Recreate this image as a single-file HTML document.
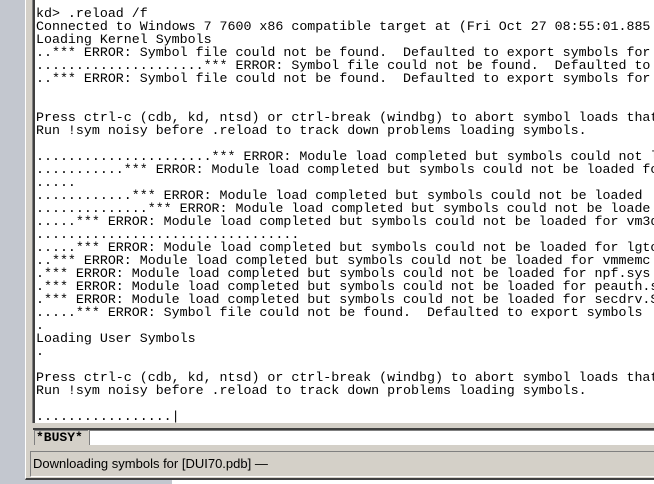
<!DOCTYPE html>
<html><head><style>
*{margin:0;padding:0;box-sizing:border-box}
body{width:654px;height:484px;overflow:hidden;background:#fff;position:relative}
#lb{position:absolute;left:0;top:0;width:25px;height:484px;background:#c3c7cf}
#bb{position:absolute;left:0;top:480px;width:172px;height:4px;background:#c3c7cf}
#frame{position:absolute;left:25px;top:0;width:629px;height:480px;background:#d4d0c8;border-left:1px solid #fff;border-bottom:2px solid #404040}
#pane{position:absolute;left:33px;top:0;width:621px;height:423px;background:#fff;border-left:2px solid #404040;box-shadow:-1px 0 0 #808080}
#pane pre{position:absolute;left:1px;top:7px;font-family:"Liberation Mono",monospace;font-size:13.3px;line-height:13px;color:#000;white-space:pre}
#sep{position:absolute;left:33px;top:428px;width:621px;height:2px;background:#404040}
#busy{position:absolute;left:34px;top:430px;width:54px;height:15px;background:#d4d0c8;border-top:1px solid #808080;border-left:1px solid #808080;font-family:"Liberation Mono",monospace;font-size:13px;line-height:14px;padding-left:1px;font-weight:bold}
#inp{position:absolute;left:89px;top:430px;width:565px;height:15px;background:#fff;border-top:1px solid #808080;border-left:1px solid #808080}
#status{position:absolute;left:30px;top:451px;width:624px;height:26px;border-top:1px solid #808080;border-left:1px solid #808080;border-bottom:1px solid #fff;font-family:"Liberation Sans",sans-serif;font-size:13px;line-height:24px;padding-left:2px;color:#000}
</style></head><body>
<div id="lb"></div><div id="bb"></div>
<div id="frame"></div>
<div id="pane"><pre>kd&gt; .reload /f
Connected to Windows 7 7600 x86 compatible target at (Fri Oct 27 08:55:01.885
Loading Kernel Symbols
..*** ERROR: Symbol file could not be found.  Defaulted to export symbols for
.....................*** ERROR: Symbol file could not be found.  Defaulted to
..*** ERROR: Symbol file could not be found.  Defaulted to export symbols for


Press ctrl-c (cdb, kd, ntsd) or ctrl-break (windbg) to abort symbol loads that
Run !sym noisy before .reload to track down problems loading symbols.

......................*** ERROR: Module load completed but symbols could not l
...........*** ERROR: Module load completed but symbols could not be loaded fo
.....
............*** ERROR: Module load completed but symbols could not be loaded
..............*** ERROR: Module load completed but symbols could not be loade
.....*** ERROR: Module load completed but symbols could not be loaded for vm3d
.................................
.....*** ERROR: Module load completed but symbols could not be loaded for lgto
..*** ERROR: Module load completed but symbols could not be loaded for vmmemc
.*** ERROR: Module load completed but symbols could not be loaded for npf.sys
.*** ERROR: Module load completed but symbols could not be loaded for peauth.s
.*** ERROR: Module load completed but symbols could not be loaded for secdrv.S
.....*** ERROR: Symbol file could not be found.  Defaulted to export symbols
.
Loading User Symbols
.

Press ctrl-c (cdb, kd, ntsd) or ctrl-break (windbg) to abort symbol loads that
Run !sym noisy before .reload to track down problems loading symbols.

.................|</pre></div>
<div id="sep"></div>
<div id="busy">*BUSY*</div>
<div id="inp"></div>
<div id="status">Downloading symbols for [DUI70.pdb] —</div>
</body></html>
